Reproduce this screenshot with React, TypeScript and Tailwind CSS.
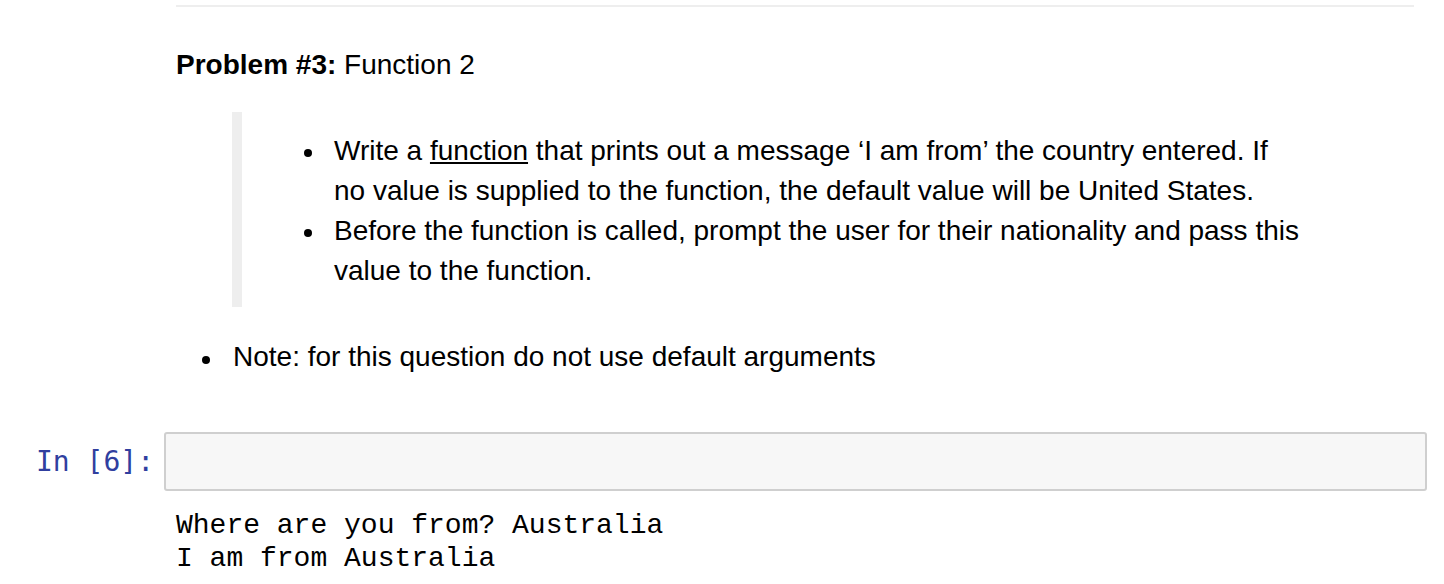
import React from 'react';

// notebook cell: markdown problem statement + an empty code cell with its output
const sans = 'font-["Liberation_Sans",Arial,sans-serif]';

const Dot = ({ className }: { className: string }) => (
  <span className={`block w-[8px] h-[8px] rounded-full bg-black shrink-0 ${className}`} />
);

const App: React.FC = () => {
  return (
    <div className="w-[1444px] h-[584px] bg-white overflow-hidden text-black">
      {/* markdown cell */}
      <div className={`pt-[5px] pl-[176px] pr-[30px] text-[28px] leading-[40px] ${sans}`}>
        <div className="h-[2px] bg-[#eeeeee]" />

        <p className="mt-[38px]">
          <b>Problem #3:</b> Function 2
        </p>

        <blockquote className="mt-[27px] ml-[56px] border-l-[10px] border-[#eeeeee] pt-[19px] pb-[16px]">
          <div className="flex items-start pl-[62px]">
            <Dot className="mt-[18px] mr-[22px]" />
            <div className="whitespace-nowrap">
              Write a <span className="underline">function</span> that prints out a message ‘I am from’ the country entered. If
              <br />
              no value is supplied to the function, the default value will be United States.
            </div>
          </div>
          <div className="flex items-start pl-[62px]">
            <Dot className="mt-[18px] mr-[22px]" />
            <div className="whitespace-nowrap">
              Before the function is called, prompt the user for their nationality and pass this
              <br />
              value to the function.
            </div>
          </div>
        </blockquote>

        <div className="mt-[30px] flex items-start pl-[26px]">
          <Dot className="mt-[19px] mr-[23px]" />
          <div className="whitespace-nowrap">Note: for this question do not use default arguments</div>
        </div>
      </div>

      {/* code cell */}
      <div className="mt-[55px] flex items-center">
        <div className='w-[164px] pr-[10px] text-right text-[28px] leading-[34px] text-[#303F9F] font-["DejaVu_Sans_Mono",monospace]'>
          In [6]:
        </div>
        <div className="w-[1263px] h-[59px] border-2 border-[#cfcfcf] bg-[#f7f7f7] rounded-[3px]" />
      </div>

      {/* output */}
      <pre className='mt-[18px] pl-[176px] text-[28px] leading-[33px] text-black font-["Liberation_Mono","Courier_New",monospace]'>
        {'Where are you from? Australia\nI am from Australia'}
      </pre>
    </div>
  );
};

export default App;
